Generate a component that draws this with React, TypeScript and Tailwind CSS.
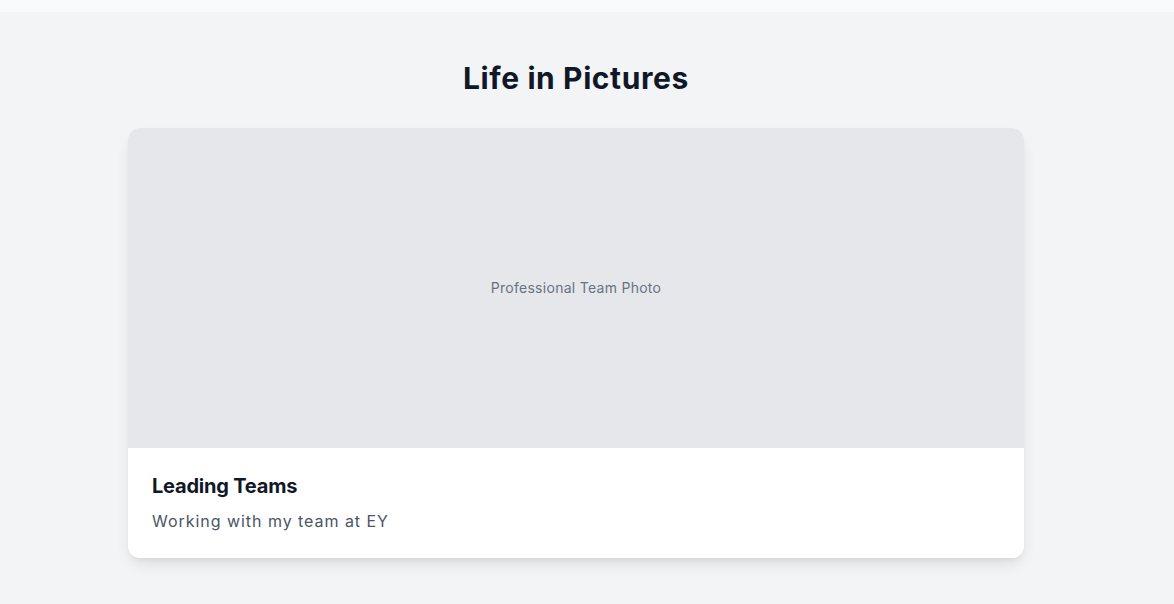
export default function App() {
  return (
    <div className="min-h-screen bg-gray-50" style={{ fontFamily: "Inter, 'Noto Sans', sans-serif" }}>
      <div className="h-3 bg-gray-50" />
      <section className="bg-gray-100 py-12 pl-4 pr-[38px]">
        <div className="max-w-4xl mx-auto">
          <h2 className="text-3xl font-bold text-center text-gray-900 mb-8 tracking-[0.02em]">Life in Pictures</h2>
          <div className="bg-white rounded-xl shadow-[0_8px_16px_-4px_rgba(0,0,0,0.12),0_3px_6px_-3px_rgba(0,0,0,0.08)] overflow-hidden">
            <div className="h-80 bg-gray-200 flex items-center justify-center">
              <span className="text-sm text-gray-500 tracking-[0.02em]">Professional Team Photo</span>
            </div>
            <div className="p-6">
              <h3 className="text-xl font-bold text-gray-900 mb-2 tracking-[-0.01em]">Leading Teams</h3>
              <p className="text-gray-600 leading-relaxed tracking-[0.06em]">Working with my team at EY</p>
            </div>
          </div>
        </div>
      </section>
    </div>
  );
}
